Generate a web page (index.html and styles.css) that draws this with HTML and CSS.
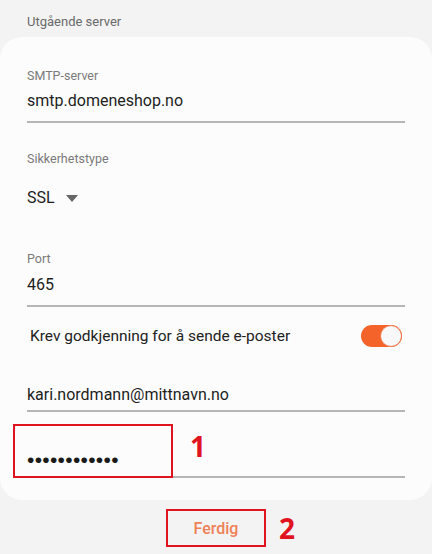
FILE: index.html
```html
<!DOCTYPE html>
<html>
<head>
    <title>Utgående server</title>
    <link rel="stylesheet" href="styles.css">
</head>
<body>
    <div class="section-title">Utgående server</div>
    <div class="card">
        <div class="field first">
            <div class="label">SMTP-server</div>
            <div class="value">smtp.domeneshop.no</div>
        </div>
        <div class="select">
            <div class="label">Sikkerhetstype</div>
            <div class="value">SSL <span class="arrow"></span></div>
        </div>
        <div class="field port">
            <div class="label">Port</div>
            <div class="value">465</div>
        </div>
        <div class="switch-row">
            <span>Krev godkjenning for å sende e-poster</span>
            <span class="switch"><span class="knob"></span></span>
        </div>
        <div class="field user">
            <div class="value">kari.nordmann@mittnavn.no</div>
        </div>
        <div class="field password">
            <div class="mark-box"></div>
            <div class="value dots">••••••••••••</div>
            <span class="mark-num one">1</span>
        </div>
    </div>
    <div class="footer">
        <button class="done">Ferdig<span class="mark-num two">2</span></button>
    </div>
</body>
</html>
```

FILE: styles.css
```css
body {
    margin: 0;
    background-color: #f3f3f3;
    font-family: Roboto, "Noto Sans", sans-serif;
    color: #222;
}
.section-title {
    height: 37px;
    box-sizing: border-box;
    padding: 14px 27px 0;
    font-size: 13px;
    line-height: 16px;
    color: #6a6a6a;
}
.card {
    background-color: #fcfcfc;
    border-radius: 22px;
    padding: 0 27px 22px;
}
.label {
    font-size: 12.5px;
    line-height: 16px;
    color: #7a7a7a;
}
.value {
    font-size: 16px;
    line-height: 20px;
    color: #1e1e1e;
}
.field {
    position: relative;
    border-bottom: 2px solid #b6b6b6;
}
.field .value {
    margin-top: 7px;
    padding-bottom: 10px;
}
.field.first {
    padding-top: 31px;
}
.select {
    padding-top: 28px;
}
.select .value {
    margin-top: 21px;
    display: flex;
    align-items: center;
}
.arrow {
    display: inline-block;
    margin-left: 11px;
    border-left: 6px solid transparent;
    border-right: 6px solid transparent;
    border-top: 7px solid #666;
}
.field.port {
    margin-top: 43px;
}
.field.port .value {
    margin-top: 8px;
}
.switch-row {
    display: flex;
    align-items: center;
    justify-content: space-between;
    padding: 17px 3px 0 3px;
    height: 24px;
    font-size: 15.5px;
    color: #222;
}
.switch {
    position: relative;
    width: 41px;
    height: 22px;
    border-radius: 11px;
    background-color: #f4632a;
}
.knob {
    position: absolute;
    right: 0;
    top: -0.5px;
    width: 20px;
    height: 20px;
    border-radius: 50%;
    background-color: #f8f8f8;
    border: 1.5px solid #f07a4a;
}
.field.user {
    margin-top: 37px;
}
.field.user .value {
    margin-top: 0;
    padding-bottom: 5px;
}
.field.password {
    margin-top: 38px;
}
.field.password .value.dots {
    margin-top: 0;
    padding-bottom: 6px;
    position: relative;
    font-family: "Liberation Sans", sans-serif;
    font-size: 21px;
    line-height: 20px;
    letter-spacing: 0.3px;
    color: #1a1a1a;
}
.mark-box {
    position: absolute;
    left: -14px;
    top: -26px;
    width: 156px;
    height: 50px;
    border: 2px solid #e0141f;
    background-color: #fcfcfc;
}
.mark-num {
    position: absolute;
    font-family: "Open Sans", sans-serif;
    font-weight: 700;
    font-size: 28px;
    line-height: 30px;
    color: #e0141f;
}
.one {
    left: 163px;
    top: -19px;
}
.footer {
    display: flex;
    justify-content: center;
    padding-top: 9px;
}
.done {
    position: relative;
    width: 100px;
    height: 38px;
    border: 2px solid #e0141f;
    background: none;
    font-family: Roboto, "Noto Sans", sans-serif;
    font-weight: 500;
    font-size: 16px;
    color: #ef8058;
}
.two {
    left: 111px;
    top: 2px;
}
```
